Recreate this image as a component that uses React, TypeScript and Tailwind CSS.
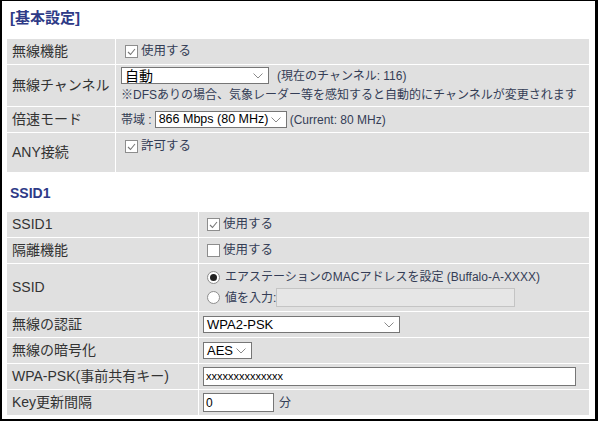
const FONT = { fontFamily: '"Liberation Sans", "Noto Sans CJK JP", sans-serif' };

const Check = ({ checked }: { checked: boolean }) => (
  <span className="flex h-[13px] w-[13px] shrink-0 items-center justify-center border border-[#8d8d8d] bg-white">
    {checked && (
      <svg width="9" height="8" viewBox="0 0 9 8">
        <polyline points="1,4 3.5,6.5 8,1" fill="none" stroke="#777" strokeWidth="1.1" />
      </svg>
    )}
  </span>
);

const Radio = ({ checked }: { checked: boolean }) => (
  <span className="flex h-[13px] w-[13px] shrink-0 items-center justify-center rounded-full border border-[#8d8d8d] bg-white">
    {checked && <span className="h-[7px] w-[7px] rounded-full bg-[#222]" />}
  </span>
);

const Chevron = () => (
  <svg width="10" height="6" viewBox="0 0 10 6" className="shrink-0">
    <polyline points="0.5,0.5 5,5 9.5,0.5" fill="none" stroke="#8a8a8a" strokeWidth="1" />
  </svg>
);

const Select = ({ value, width, size = 'text-[13px]' }: { value: string; width: string; size?: string }) => (
  <div
    className={`flex h-[17px] shrink-0 items-center justify-between gap-[2px] overflow-hidden whitespace-nowrap border border-[#767676] bg-white pl-[3px] pr-[5px] leading-none text-black ${size} ${width}`}
  >
    <span>{value}</span>
    <Chevron />
  </div>
);

const Label = ({ children, width }: { children: React.ReactNode; width: string }) => (
  <div className={`flex shrink-0 items-center bg-[#e0e0e0] pl-[5px] text-[14px] text-[#333] ${width}`}>{children}</div>
);

export default function App() {
  return (
    <div
      style={FONT}
      className="h-[421px] w-[598px] border-b-2 border-l-2 border-r-[3px] border-t border-black bg-white pl-[5px] pr-[6px] text-[#343d56]"
    >
      <div className="h-[38px] pl-[3px] pt-[7px] text-[15px] font-bold leading-[20px] text-[#2e3a87]">[基本設定]</div>

      <div className="flex flex-col gap-px">
        <div className="flex h-[25px] gap-px">
          <Label width="w-[108px]">無線機能</Label>
          <div className="flex flex-1 items-center gap-[3px] bg-[#e0e0e0] pl-[9px] text-[12.5px]">
            <Check checked />
            <span>使用する</span>
          </div>
        </div>
        <div className="flex h-[41px] gap-px">
          <Label width="w-[108px]">無線チャンネル</Label>
          <div className="flex flex-1 flex-col gap-[3px] bg-[#e0e0e0] pl-[5px] pt-[2px] text-[12px] leading-[16px]">
            <div className="flex items-center gap-[8px]">
              <Select value="自動" width="w-[148px]" size="text-[14px]" />
              <span>(現在のチャンネル: 116)</span>
            </div>
            <div className="whitespace-nowrap">※DFSありの場合、気象レーダー等を感知すると自動的にチャンネルが変更されます</div>
          </div>
        </div>
        <div className="flex h-[25px] gap-px">
          <Label width="w-[108px]">倍速モード</Label>
          <div className="flex flex-1 items-center gap-[3px] bg-[#e0e0e0] pl-[5px] text-[12px]">
            <span>帯域 :</span>
            <Select value="866 Mbps (80 MHz)" width="w-[132px]" size="text-[12.5px]" />
            <span>(Current: 80 MHz)</span>
          </div>
        </div>
        <div className="flex h-[39px] gap-px">
          <Label width="w-[108px]">ANY接続</Label>
          <div className="flex flex-1 items-start gap-[3px] bg-[#e0e0e0] pl-[9px] pt-[7px] text-[12.5px] leading-[13px]">
            <Check checked />
            <span>許可する</span>
          </div>
        </div>
      </div>

      <div className="h-[40px] pl-[3px] pt-[11px] text-[14px] font-bold leading-[20px] text-[#2e3a87]">SSID1</div>

      <div className="flex flex-col gap-px">
        <div className="flex h-[25px] gap-px">
          <Label width="w-[191px]">SSID1</Label>
          <div className="flex flex-1 items-center gap-[3px] bg-[#e0e0e0] pl-[8px] text-[12.5px]">
            <Check checked />
            <span>使用する</span>
          </div>
        </div>
        <div className="flex h-[25px] gap-px">
          <Label width="w-[191px]">隔離機能</Label>
          <div className="flex flex-1 items-center gap-[3px] bg-[#e0e0e0] pl-[8px] text-[12.5px]">
            <Check checked={false} />
            <span>使用する</span>
          </div>
        </div>
        <div className="flex h-[47px] gap-px">
          <Label width="w-[191px]">SSID</Label>
          <div className="flex flex-1 flex-col justify-center gap-[2px] bg-[#e0e0e0] pl-[8px] text-[12px]">
            <div className="flex items-center gap-[5px]">
              <Radio checked />
              <span>エアステーションのMACアドレスを設定 (Buffalo-A-XXXX)</span>
            </div>
            <div className="flex items-center gap-[5px]">
              <Radio checked={false} />
              <span>値を入力:</span>
              <div className="-ml-[5px] h-[19px] w-[239px] border border-[#c4c4c4] bg-[#e6e6e6]" />
            </div>
          </div>
        </div>
        <div className="flex h-[25px] gap-px">
          <Label width="w-[191px]">無線の認証</Label>
          <div className="flex flex-1 items-center bg-[#e0e0e0] pl-[4px]">
            <Select value="WPA2-PSK" width="w-[197px]" />
          </div>
        </div>
        <div className="flex h-[25px] gap-px">
          <Label width="w-[191px]">無線の暗号化</Label>
          <div className="flex flex-1 items-center bg-[#e0e0e0] pl-[4px]">
            <Select value="AES" width="w-[49px]" />
          </div>
        </div>
        <div className="flex h-[25px] gap-px">
          <Label width="w-[191px]">WPA-PSK(事前共有キー)</Label>
          <div className="flex flex-1 items-center bg-[#e0e0e0] pl-[4px]">
            <div className="flex h-[19px] w-[373px] items-center border border-[#767676] bg-white pl-[2px] text-[11px] text-black">
              xxxxxxxxxxxxxx
            </div>
          </div>
        </div>
        <div className="flex h-[25px] gap-px">
          <Label width="w-[191px]">Key更新間隔</Label>
          <div className="flex flex-1 items-center gap-[5px] bg-[#e0e0e0] pl-[4px] text-[12px]">
            <div className="flex h-[19px] w-[71px] items-center border border-[#767676] bg-white pl-[2px] text-[12px] text-black">
              0
            </div>
            <span>分</span>
          </div>
        </div>
      </div>
    </div>
  );
}
